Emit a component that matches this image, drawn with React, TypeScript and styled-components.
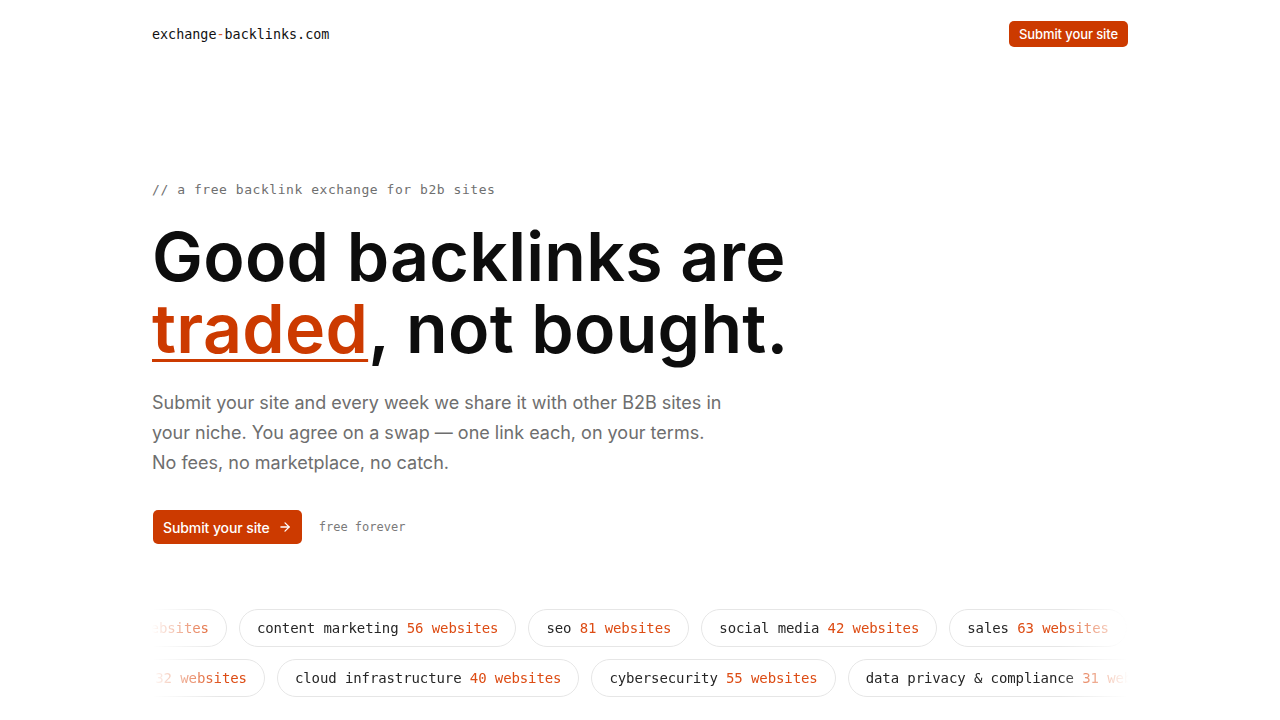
import React from "react";
import styled, { createGlobalStyle } from "styled-components";

const ORANGE = "#cc3a00";
const MONO = `"DejaVu Sans Mono", "Liberation Mono", monospace`;
const SANS = `Inter, "Noto Sans", sans-serif`;

const GlobalStyle = createGlobalStyle`
  html, body { margin: 0; padding: 0; background: #ffffff; }
  body { font-family: ${SANS}; color: #0d0d0d; -webkit-font-smoothing: antialiased; }
  * { box-sizing: border-box; }
`;

const Page = styled.div`
  width: 976px;
  margin: 0 auto;
  display: flex;
  flex-direction: column;
`;

const Header = styled.header`
  height: 68px;
  display: flex;
  align-items: center;
  justify-content: space-between;
`;

const Logo = styled.a`
  font-family: ${MONO};
  font-size: 13.4px;
  color: #111;
  text-decoration: none;
`;

const LogoDash = styled.span`
  color: #e0602e;
`;

const Button = styled.a<{ $size?: "sm" | "md" }>`
  display: inline-flex;
  align-items: center;
  gap: 8px;
  background: ${ORANGE};
  color: #fff;
  font-family: ${SANS};
  font-weight: 500;
  text-decoration: none;
  border-radius: 5px;
  height: ${(p) => (p.$size === "sm" ? "26px" : "34px")};
  padding: 0 10px;
  font-size: ${(p) => (p.$size === "sm" ? "13px" : "14px")};
  letter-spacing: -0.1px;
`;

const Hero = styled.section`
  padding-top: 114px;
  display: flex;
  flex-direction: column;
  align-items: flex-start;
`;

const Eyebrow = styled.p`
  margin: 0;
  font-family: ${MONO};
  font-size: 13px;
  letter-spacing: 0.55px;
  color: #6f6f6f;
  line-height: 16px;
`;

const Title = styled.h1`
  margin: 22px 0 0;
  font-family: ${SANS};
  font-weight: 600;
  font-size: 68px;
  line-height: 72px;
  letter-spacing: 0.004em;
  color: #0d0d0d;
`;

const Accent = styled.span`
  color: ${ORANGE};
  text-decoration: underline;
  text-decoration-thickness: 3px;
  text-underline-offset: 6px;
  text-decoration-skip-ink: none;
`;

const Lead = styled.p`
  margin: 24px 0 0;
  max-width: 572px;
  font-size: 18px;
  line-height: 30px;
  color: #6e6e6e;
`;

const Actions = styled.div`
  margin-top: 32px;
  display: flex;
  align-items: center;
  gap: 17px;
  padding-left: 1px;
`;

const Note = styled.span`
  font-family: ${MONO};
  font-size: 12px;
  color: #7a7a7a;
`;

const Rows = styled.div`
  margin-top: 65px;
  display: flex;
  flex-direction: column;
  gap: 12px;
  overflow: hidden;
  -webkit-mask-image: linear-gradient(90deg, transparent 0, #000 70px, #000 calc(100% - 70px), transparent 100%);
  mask-image: linear-gradient(90deg, transparent 0, #000 70px, #000 calc(100% - 70px), transparent 100%);
`;

const Track = styled.div<{ $shift: number }>`
  display: flex;
  gap: 12px;
  width: max-content;
  transform: translateX(${(p) => p.$shift}px);
`;

const Pill = styled.span`
  flex-shrink: 0;
  display: inline-flex;
  align-items: center;
  gap: 8.3px;
  height: 38px;
  padding: 0 17px;
  border: 1px solid #e6e6e6;
  border-radius: 19px;
  font-family: ${MONO};
  font-size: 14px;
  letter-spacing: -0.1px;
  color: #262626;
  white-space: nowrap;
`;

const Count = styled.span`
  color: #dd4c14;
`;

type Niche = { name: string; count: number };

const rowOne: Niche[] = [
  { name: "lead generation", count: 29 },
  { name: "content marketing", count: 56 },
  { name: "seo", count: 81 },
  { name: "social media", count: 42 },
  { name: "sales", count: 63 },
  { name: "email marketing", count: 38 },
];

const rowTwo: Niche[] = [
  { name: "devops", count: 32 },
  { name: "cloud infrastructure", count: 40 },
  { name: "cybersecurity", count: 55 },
  { name: "data privacy & compliance", count: 31 },
  { name: "analytics", count: 47 },
];

function NicheRow({ items, shift }: { items: Niche[]; shift: number }) {
  return (
    <Track $shift={shift}>
      {items.map((n) => (
        <Pill key={n.name}>
          {n.name}
          <Count>{n.count} websites</Count>
        </Pill>
      ))}
    </Track>
  );
}

const Arrow = () => (
  <svg width="14" height="14" viewBox="0 0 24 24" fill="none" stroke="currentColor" strokeWidth="2.2" strokeLinecap="round" strokeLinejoin="round">
    <path d="M5 12h14" />
    <path d="m12 5 7 7-7 7" />
  </svg>
);

export default function App() {
  return (
    <>
      <GlobalStyle />
      <Page>
        <Header>
          <Logo href="#">
            exchange<LogoDash>-</LogoDash>backlinks.com
          </Logo>
          <Button href="#" $size="sm">Submit your site</Button>
        </Header>
        <Hero>
          <Eyebrow>// a free backlink exchange for b2b sites</Eyebrow>
          <Title>
            Good backlinks are
            <br />
            <Accent>traded</Accent>, not bought.
          </Title>
          <Lead>
            Submit your site and every week we share it with other B2B sites in your niche. You agree on a swap — one link each, on your terms. No fees, no marketplace, no catch.
          </Lead>
          <Actions>
            <Button href="#">
              Submit your site <Arrow />
            </Button>
            <Note>free forever</Note>
          </Actions>
        </Hero>
        <Rows>
          <NicheRow items={rowOne} shift={-186} />
          <NicheRow items={rowTwo} shift={-73} />
        </Rows>
      </Page>
    </>
  );
}
